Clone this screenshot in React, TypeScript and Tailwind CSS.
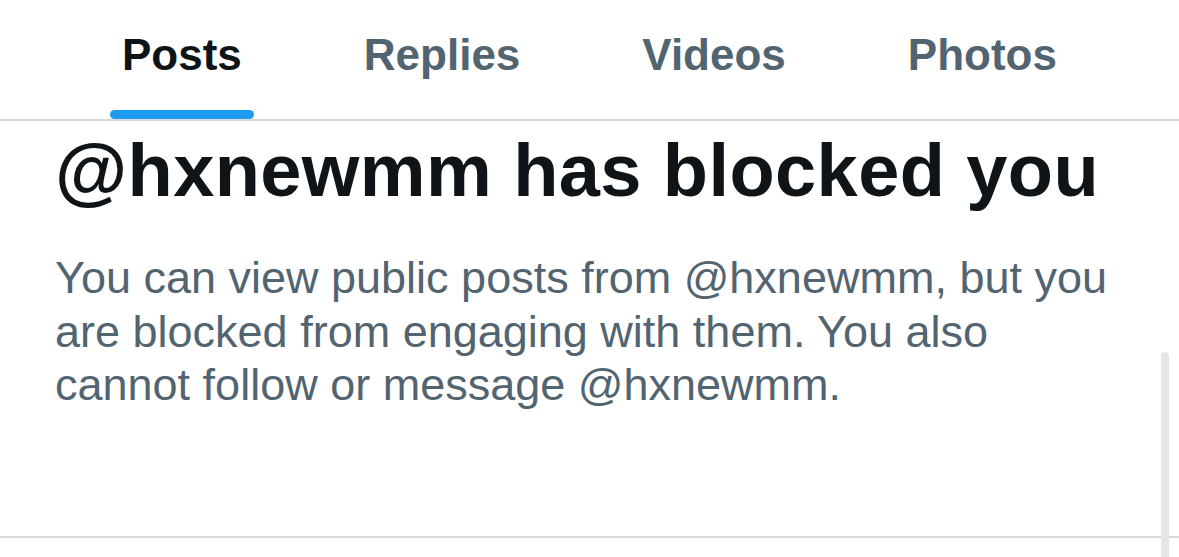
const tabs = ["Posts", "Replies", "Videos", "Photos"];

export default function App() {
  return (
    <div
      className="relative h-[557px] w-[1179px] overflow-hidden bg-white"
      style={{ fontFamily: '"Liberation Sans", Arial, sans-serif' }}
    >
      <nav className="flex h-[121px] border-b-[2px] border-[#d6dadd] pl-[61px]">
        {tabs.map((t, i) => (
          <div key={t} className="relative flex flex-col items-center px-[61px]">
            <span
              className={
                i === 0
                  ? "pt-[29px] text-[44px] font-bold leading-[52px] text-[#0f1419]"
                  : "pt-[29px] text-[44px] font-bold leading-[52px] text-[#536471]"
              }
            >
              {t}
            </span>
            {i === 0 && (
              <div className="absolute bottom-0 h-[9px] w-[144px] rounded-full bg-[#1d9bf0]" />
            )}
          </div>
        ))}
      </nav>

      <section className="px-[55px] pt-[8px]">
        <h1 className="text-[74px] font-extrabold leading-[84px] tracking-[0.4px] text-[#0f1419]">
          @hxnewmm has blocked you
        </h1>
        <p className="mt-[38px] text-[45px] leading-[53.5px] text-[#536471]">
          You can view public posts from @hxnewmm, but you are blocked from
          engaging with them. You also cannot follow or message @hxnewmm.
        </p>
      </section>

      <div className="absolute left-0 right-0 top-[536px] h-[2px] bg-[#d6dadd]" />
      <div className="absolute right-[10px] top-[352px] h-[240px] w-[8px] rounded-full bg-[#e6e6e6]" />
    </div>
  );
}
